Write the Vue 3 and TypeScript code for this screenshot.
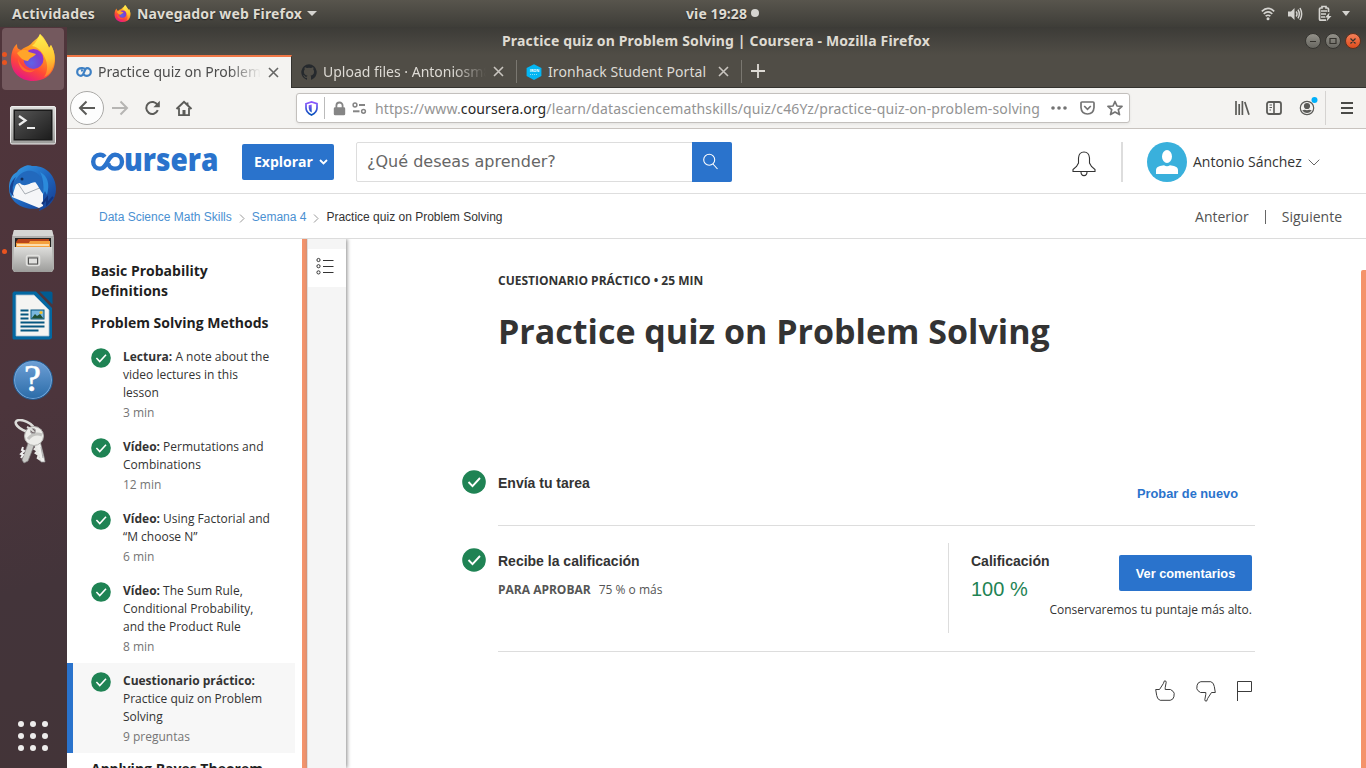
<script setup lang="ts">
interface Lesson {
  kind: string
  title: string
  meta: string
  active?: boolean
}

const lessons: Lesson[] = [
  { kind: 'Lectura:', title: 'A note about the video lectures in this lesson', meta: '3 min' },
  { kind: 'Vídeo:', title: 'Permutations and Combinations', meta: '12 min' },
  { kind: 'Vídeo:', title: 'Using Factorial and “M choose N”', meta: '6 min' },
  { kind: 'Vídeo:', title: 'The Sum Rule, Conditional Probability, and the Product Rule', meta: '8 min' },
  { kind: 'Cuestionario práctico:', title: 'Practice quiz on Problem Solving', meta: '9 preguntas', active: true },
]
const gridDots: number[] = [0, 1, 2, 3, 4, 5, 6, 7, 8]
</script>

<template>
  <div class="desktop">
    <svg class="defs" width="0" height="0">
      <defs>
        <linearGradient id="ffBody" x1="0.8" y1="0" x2="0.3" y2="1">
          <stop offset="0" stop-color="#ffe14a" /><stop offset="0.4" stop-color="#ff9a1f" />
          <stop offset="0.7" stop-color="#ff4a36" /><stop offset="1" stop-color="#e31587" />
        </linearGradient>
        <linearGradient id="ffFlame" x1="0.5" y1="0" x2="0.6" y2="1">
          <stop offset="0" stop-color="#fff04f" /><stop offset="0.6" stop-color="#ffc531" /><stop offset="1" stop-color="#ff7a2c" />
        </linearGradient>
        <radialGradient id="ffGlobe" cx="0.4" cy="0.7" r="0.8">
          <stop offset="0" stop-color="#5f63e6" /><stop offset="0.6" stop-color="#7a3fd0" /><stop offset="1" stop-color="#a928c9" />
        </radialGradient>
        <symbol id="firefox" viewBox="0 0 46 47">
          <path d="M7 10 C7 14 8 15 11 16 C14 13 18 13 21 10 C25 5 29 4 30 0 C33 2 36 7 38 11 L39 14 L41 11 C45 18 46 26 44 33 C41 42 33 47 23 47 C10 47 1 38 1 26 C1 19 3 13 7 10Z" fill="url(#ffBody)" />
          <path d="M22 12 C26 9 28 4 30 0 C32 4 37 8 39 14 L41 11 C45 18 46 27 42 35 C40 40 37 42 34 43 C38 38 38 30 35 24 C32 17 28 13 22 12Z" fill="url(#ffFlame)" />
          <circle cx="23.500" cy="25" r="10" fill="url(#ffGlobe)" />
          <path d="M7 19 C12 15 16 15 19 18 L26 20 C24 23 20 23 18 27 C14 27 10 24 7 19Z" fill="#ffa52a" />
          <path d="M8 24 C10 32 16 38 25 36 C18 42 8 36 8 24Z" fill="#ff6a2c" />
        </symbol>
        <linearGradient id="silver" x1="0" y1="0" x2="0" y2="1"><stop offset="0" stop-color="#dededc" /><stop offset="1" stop-color="#9c9c9a" /></linearGradient>
        <linearGradient id="black" x1="0" y1="0" x2="1" y2="1"><stop offset="0" stop-color="#555" /><stop offset="1" stop-color="#1d1d1d" /></linearGradient>
        <linearGradient id="bird" x1="0" y1="0" x2="1" y2="1"><stop offset="0" stop-color="#39a0e8" /><stop offset="0.5" stop-color="#1f68c1" /><stop offset="1" stop-color="#15388a" /></linearGradient>
        <linearGradient id="shield" x1="0" y1="0" x2="0" y2="1"><stop offset="0" stop-color="#9059ff" /><stop offset="1" stop-color="#0250bb" /></linearGradient>
        <linearGradient id="knob" x1="0" y1="0" x2="0" y2="1"><stop offset="0" stop-color="#95938b" /><stop offset="1" stop-color="#65645e" /></linearGradient>
        <linearGradient id="knobClose" x1="0" y1="0" x2="0" y2="1"><stop offset="0" stop-color="#f5825b" /><stop offset="1" stop-color="#df4a1a" /></linearGradient>
        <symbol id="check" viewBox="0 0 24 24">
          <circle cx="12" cy="12" r="11.800" fill="#1f8354" />
          <path d="M6.500 12 L10.500 16.200 L18 8" fill="none" stroke="#fff" stroke-width="1.900" />
        </symbol>
        <symbol id="thumb" viewBox="0 0 20 22">
          <path d="M.7 9.500H4.500L8.300 3.600 9.400.9Q11 .4 11.200 2.200L10.200 7.700V9.500H15.500L18.200 11.500 19.200 13.300 18.900 16.800 17.600 19.200 15.200 20.300H5.200L2.800 18.600 1.700 15.500 .7 9.500Z" fill="none" stroke="#3c3c3c" stroke-width="1" />
        </symbol>
      </defs>
    </svg>

    <header class="panel">
      <span class="panel-left">Actividades</span>
      <svg class="panel-fx" width="17" height="17"><use href="#firefox" /></svg>
      <span class="panel-app">Navegador web Firefox</span>
      <i class="caret"></i>
      <div class="clock"><span>vie 19:28</span><i></i></div>
      <div class="tray">
        <svg width="14" height="14" viewBox="0 0 14 14" fill="none" stroke="#d5d4d0" stroke-width="1.600"><path d="M.8 4.300Q7-1.600 13.200 4.300M2.700 6.800Q7 3 11.300 6.800M4.600 9.200Q7 7.300 9.400 9.200" /><circle cx="7" cy="11.800" r="1.500" fill="#d5d4d0" stroke="none" /></svg>
        <svg width="15" height="14" viewBox="0 0 15 14" fill="none" stroke="#d5d4d0" stroke-width="1.500"><path d="M0 4.500H3L6.500 1V13L3 9.500H0Z" fill="#d5d4d0" stroke="none" /><path d="M8.200 4.500Q9.800 7 8.200 9.500M10 2.700Q12.600 7 10 11.300M12 1Q15.300 7 12 13" /></svg>
        <svg class="battery" width="14" height="17" viewBox="0 0 14 17" fill="none" stroke="#d5d4d0" stroke-width="1.700"><path d="M8 15.200H2.500Q1.500 15.200 1.500 14V4Q1.500 3 2.500 3H4V1.500H8V3H9.500Q10.500 3 10.500 4V7M3 6H9M3 9H8M3 12H7" /><path d="M11.500 7.500L7 12.500H9.500L8.500 16.500 13.500 11H11Z" fill="#d5d4d0" stroke="none" /></svg>
        <i class="caret"></i>
      </div>
    </header>

    <div class="workspace">
      <nav class="dock">
        <div class="tile selected"><i class="run two"></i><svg width="46" height="47"><use href="#firefox" /></svg></div>
        <div class="tile"><svg width="46" height="39" viewBox="0 0 46 39"><rect x=".5" y=".5" width="45" height="37.500" rx="1.500" fill="url(#silver)" stroke="#eee" /><rect x="3.500" y="3.500" width="39" height="31" fill="#1a1a1a" /><rect x="5" y="5" width="36" height="28" fill="url(#black)" /><path d="M9 10L15.500 14.500 9 19" fill="none" stroke="#eee" stroke-width="2.200" /><path d="M17 22H25" stroke="#eee" stroke-width="2" /></svg></div>
        <div class="tile mail"><svg width="49" height="48" viewBox="0 0 49 48"><path d="M15 3C18 1 22 1 24 2C38 1 48 12 48 25C48 35 42 43 31 47L32 44C20 47 8 42 3 33C-1 24 1 12 9 8C10 6 12 4 15 3Z" fill="url(#bird)" /><path d="M9 17L12 19 17 20 28 18 35 26V42L31 44 4 33Z" fill="#f5f6f8" /><path d="M9 18L17 30 34 23" fill="none" stroke="#a7adb3" stroke-width="1" /><path d="M9 14C16 4 28 5 33 14C35 20 35 25 36 31C32 27 30 20 26 17C21 21 15 23 12 19C9 19 8 21 5 23C4 20 6 17 9 14Z" fill="#2269bd" /><path d="M32 8C40 12 42 20 39 31L37 27 35 31C36 20 35 14 32 8Z" fill="#2b8adb" /><path d="M34 40L39 34 39 40 45 33" fill="none" stroke="#12347d" stroke-width="2" /><circle cx="14" cy="15" r="1.500" fill="#102c58" /><path d="M2 28C1 23 3 17 8 13C4 20 4 27 6 33Z" fill="#184291" /></svg></div>
        <div class="tile files"><i class="run"></i><svg width="42" height="44" viewBox="0 0 42 44"><path d="M2 1H40L42 8V40L40 43H2L0 40V8Z" fill="#b0b0ae" /><path d="M2 1H40L41.500 7H.5Z" fill="#d5d5d3" /><rect x="3" y="9" width="36" height="12" fill="#252321" /><path d="M4 21V13L6 10H37V21Z" fill="#b8441a" /><path d="M4 21V14H17L18 12H38V21Z" fill="#f5a03d" /><path d="M5 16H37" stroke="#fff0cf" stroke-width="1.500" /><path d="M2 18H40L41 41 39 43H3L1 41Z" fill="url(#silver)" /><rect x="14.500" y="26.500" width="13" height="10" rx="2" fill="#b7b7b5" stroke="#e1e1df" stroke-width="1.500" /><rect x="16.500" y="29" width="9" height="6" fill="#dfdfdd" stroke="#555" /></svg></div>
        <div class="tile"><svg width="41" height="49" viewBox="0 0 41 49"><path d="M2 .5H24L40 17V47L38 48.500H2Q.5 48.500 .5 47V2Z" fill="#0368a2" /><path d="M27.500 .5H38.500Q40.500 .5 40.500 2V13.500Z" fill="#005b91" /><path d="M4 4H22L37 19V45H4Z" fill="#f4f4f2" stroke="#a7bed0" stroke-width=".8" /><path d="M8.500 19.500H16.500M8.500 23.500H16.500M8.500 27.500H16.500M8.500 31.500H32.500M8.500 35.500H32.500M8.500 39.500H26.500" stroke="#065780" stroke-width="1.900" /><rect x="19" y="19" width="13" height="9" fill="#79b7df" stroke="#065780" stroke-width="1" /><path d="M19.500 27.500L23 23 25 25 28 23 31.500 27.500Z" fill="#215034" /><circle cx="29" cy="21.500" r="1.600" fill="#f2c12d" /></svg></div>
        <div class="tile assist"><div class="help">?</div></div>
        <div class="tile keys"><svg width="34" height="46" viewBox="0 0 34 46"><ellipse cx="11" cy="7" rx="10" ry="4.600" transform="rotate(25 11 7)" fill="none" stroke="#dcdcd9" stroke-width="2.600" /><path d="M15 22L8 41 10 44 14 42 21 24Z" fill="#c9c9c6" stroke="#888" stroke-width=".7" /><path d="M9 28L8 31 10 32 7 35 9 36 7 39" stroke="#eee" stroke-width="2" fill="none" /><path d="M19 23L27 43 31 43 30 38 26 22Z" fill="#efefed" stroke="#999" stroke-width=".7" /><path d="M23 28L21 30 24 32 22 34 25 36 24 39 27 41" stroke="#e8e8e5" stroke-width="2.500" fill="none" /><circle cx="20" cy="17" r="9.500" fill="#ecece9" stroke="#b1b1ae" /><path d="M14 20Q20 13 28 16" stroke="#c3c3c0" stroke-width="3" fill="none" /><circle cx="19" cy="12" r="2.600" fill="#6a5c60" stroke="#aaa" /><path d="M27 28L29 39" stroke="#aaa" /><path d="M13 8Q18 10 20 13" stroke="#dcdcd9" stroke-width="2.200" fill="none" /></svg></div>
        <div class="apps"><i v-for="dot in gridDots" :key="dot"></i></div>
      </nav>

      <section class="window">
        <div class="titlebar">
          <span class="window-title">Practice quiz on Problem Solving | Coursera - Mozilla Firefox</span>
          <div class="controls">
            <svg width="56" height="18" viewBox="0 0 56 18"><circle cx="8" cy="9" r="7.500" fill="url(#knob)" stroke="#353430" /><circle cx="28" cy="9" r="7.500" fill="url(#knob)" stroke="#353430" /><circle cx="48" cy="9" r="7.500" fill="url(#knobClose)" stroke="#5a3020" /><path d="M5 9.500H11M25 6.500H31V11.500H25ZM45.500 6.500L50.500 11.500M50.500 6.500L45.500 11.500" fill="none" stroke="#35332e" stroke-width="1.200" /></svg>
          </div>
        </div>

        <div class="tabs">
          <div class="tab current">
            <svg width="16" height="16" viewBox="0 0 16 16"><path d="M9.700 5.800C8.800 4.700 7.500 3.900 5.800 4.100 2.700 4 1.200 5.700 1.200 8S3 11.900 5 11.900C8.500 11.900 8.100 4.100 11 4.100 13.200 4.100 14.800 5.800 14.800 8S13.100 11.900 11 11.900C9 11.900 7.800 10.800 7.300 9.600M6.700 7.200C6.300 6.700 5.700 6.300 5 6.500" fill="none" stroke="#3e80c4" stroke-width="2.200" /></svg>
            <span class="tab-label t1">Practice quiz on Problem</span>
            <svg class="close" width="11" height="11" viewBox="0 0 11 11"><path d="M1 1L10 10M10 1L1 10" /></svg>
          </div>
          <div class="tab">
            <svg width="16" height="16" viewBox="0 0 16 16"><path fill="#25292d" d="M8 .2a8 8 0 0 0-2.500 15.500c.4.100.5-.1.500-.4v-1.500c-2.200.5-2.700-1-2.700-1-.4-.9-.9-1.200-.9-1.200-.7-.5.1-.5.100-.5.800.1 1.200.8 1.200.8.700 1.300 1.900.9 2.300.7.100-.5.300-.9.500-1.100-1.800-.2-3.600-.9-3.600-4 0-.8.300-1.500.8-2.100-.1-.2-.4-1 .1-2.100 0 0 .7-.2 2.200.8a7.500 7.500 0 0 1 4 0c1.500-1 2.200-.8 2.200-.8.500 1.100.2 1.900.1 2.100.5.600.8 1.300.8 2.100 0 3.100-1.800 3.800-3.600 4 .3.200.5.700.5 1.400v2.400c0 .3.100.5.500.4A8 8 0 0 0 8 .2Z" /></svg>
            <span class="tab-label t2">Upload files · Antoniosm8</span>
            <svg class="close" width="11" height="11" viewBox="0 0 11 11"><path d="M1 1L10 10M10 1L1 10" /></svg>
          </div>
          <div class="tab">
            <svg width="16" height="16" viewBox="0 0 16 16"><path d="M8 .2L15.400 4V12L8 15.900.6 12V4Z" fill="#03b6f4" /><text x="3.700" y="8" font-size="3.700" font-weight="700" fill="#fff" font-family="Open Sans">IRON</text><path d="M4 10.500H12" stroke="#a8e7fa" stroke-width=".8" stroke-dasharray="1 1" /></svg>
            <span class="tab-label t3">Ironhack Student Portal</span>
            <svg class="close" width="11" height="11" viewBox="0 0 11 11"><path d="M1 1L10 10M10 1L1 10" /></svg>
          </div>
          <svg class="plus" width="14" height="14" viewBox="0 0 14 14"><path d="M7 0V14M0 7H14" stroke="#dedbd5" stroke-width="1.800" /></svg>
        </div>

        <div class="toolbar">
          <span class="back"><svg width="18" height="16" viewBox="0 0 18 16"><path d="M17 8H2M8.500 1.500L2 8L8.500 14.500" /></svg></span>
          <svg class="forward" width="18" height="16" viewBox="0 0 18 16"><path d="M1 8H16M9.500 1.500L16 8L9.500 14.500" /></svg>
          <svg class="reload" width="17" height="16" viewBox="0 0 17 16"><path d="M13.800 10.200A6 6 0 1 1 13.500 5" fill="none" stroke="#5b5b58" stroke-width="2" /><path d="M15.800 .8V7.200H9.400Z" fill="#5b5b58" /></svg>
          <svg class="home" width="18" height="17" viewBox="0 0 18 17"><path d="M1.500 9L9 1.800 16.500 9" fill="none" stroke="#5b5b58" stroke-width="2" /><path d="M4 8V15.200H14V8M12.500 5V2.500" fill="none" stroke="#5b5b58" stroke-width="1.800" /><path d="M7.500 15V10H10.500V15" fill="#5b5b58" /></svg>
          <div class="urlbar">
            <svg width="13" height="15" viewBox="0 0 13 15"><path d="M1 2.700L6.500 1L12 2.700V7Q12 11.500 6.500 14Q1 11.500 1 7Z" fill="none" stroke="url(#shield)" stroke-width="1.700" /><path d="M6.700 3.500V11.500Q3.800 10 3.700 7V4.300Z" fill="url(#shield)" /></svg>
            <i class="url-sep"></i>
            <svg class="lock" width="13" height="15" viewBox="0 0 13 15"><path d="M3.400 7V4.600A3.100 3.100 0 0 1 9.600 4.600V7" fill="none" stroke="#858585" stroke-width="1.800" /><rect x=".8" y="6.300" width="11.400" height="8" rx="1.400" fill="#858585" /></svg>
            <svg class="perm" width="15" height="13" viewBox="0 0 15 13" fill="none" stroke="#858585" stroke-width="1.500"><circle cx="3" cy="3" r="1.900" /><path d="M7 3H13" stroke-width="2" /><circle cx="11.500" cy="9.300" r="1.900" /><path d="M1 9.300H7.500" stroke-width="2" /></svg>
            <span class="url">https://www.<b>coursera.org</b>/learn/datasciencemathskills/quiz/c46Yz/practice-quiz-on-problem-solving</span>
            <svg class="dots" width="16" height="4" viewBox="0 0 16 4" fill="#737373"><circle cx="2" cy="2" r="1.800" /><circle cx="8" cy="2" r="1.800" /><circle cx="14" cy="2" r="1.800" /></svg>
            <svg class="pocket" width="15" height="14" viewBox="0 0 15 14" fill="none" stroke="#737373" stroke-width="1.700"><path d="M1 2Q1 1 2 1H13Q14 1 14 2V6.500Q13.500 13 7.500 13Q1.500 13 1 6.500ZM4.200 5L7.500 8.300 10.800 5" /></svg>
            <svg class="star" width="16" height="16" viewBox="0 0 16 16"><path d="M8 1.500L10 6 15 6.400 11.300 9.600 12.500 14.600 8 12 3.500 14.600 4.700 9.600 1 6.400 6 6Z" fill="none" stroke="#737373" stroke-width="1.700" stroke-linejoin="round" /></svg>
          </div>
          <div class="tools">
            <svg width="15" height="14" viewBox="0 0 15 14" stroke="#5b5b58" stroke-width="1.700"><path d="M1 0V14M4.200 3V14M7.400 0V14M9.800 1L14 13.700" /></svg>
            <svg width="16" height="14" viewBox="0 0 16 14" fill="none" stroke="#5b5b58"><rect x="1" y="1" width="14" height="12" rx="2" stroke-width="1.800" /><path d="M8 1V13" stroke-width="1.600" /><path d="M3.500 4H6M3.500 6.500H6M3.500 9H5" /></svg>
            <svg width="20" height="20" viewBox="0 0 20 20"><circle cx="8" cy="12" r="6.700" fill="none" stroke="#5b5b58" stroke-width="1.200" /><circle cx="8" cy="10" r="3.100" fill="#5b5b58" /><path d="M3.200 14.500Q5.500 13 8 14.300 10.500 13 12.800 14.500 8 19.500 3.200 14.500Z" fill="#5b5b58" /><circle cx="15.500" cy="4" r="3" fill="#00b0fa" /></svg>
            <i class="tool-sep"></i>
            <svg width="12" height="12" viewBox="0 0 12 12"><path d="M0 1H12M0 6H12M0 11H12" stroke="#4a4a47" stroke-width="1.800" /></svg>
          </div>
        </div>

        <div class="site-header">
          <svg class="logo" width="128" height="22" viewBox="0 0 128 22">
            <path d="M13.800 6C12.800 4.700 11 3.800 9 3.800 5 3.800 2.200 6.700 2.200 10.700S5 17.600 9 17.600C16.500 17.600 16.500 3.800 24 3.800 28.200 3.800 31 6.700 31 10.700S28.200 17.600 24 17.600C20.500 17.600 17.600 15.500 17.200 12.300" fill="none" stroke="#2a73cc" stroke-width="4.400" />
            <text x="33" y="19.700" textLength="94.500" lengthAdjust="spacingAndGlyphs" class="logo-text">ursera</text>
          </svg>
          <button class="explore">Explorar<svg width="9" height="6" viewBox="0 0 9 6"><path d="M1 1L4.500 4.500L8 1" fill="none" stroke="#fff" stroke-width="1.800" /></svg></button>
          <div class="search"><span>¿Qué deseas aprender?</span><i><svg width="16" height="17" viewBox="0 0 16 17" fill="none" stroke="#fff" stroke-width="1.100"><circle cx="6.200" cy="6.700" r="5.500" /><path d="M10 11L14.500 16" /></svg></i></div>
          <svg class="bell" width="24" height="26" viewBox="0 0 24 26" fill="none" stroke="#333" stroke-width="1.100"><path d="M1 20.500H23V18.500L19.500 15.500 17.500 12V7Q17 1 12 1T6.500 7V12L4.500 15.500 1 18.500ZM9 21Q9 24.600 12 24.600T15 21" /></svg>
          <i class="header-sep"></i>
          <svg class="avatar" width="40" height="40" viewBox="0 0 40 40"><circle cx="20" cy="20" r="20" fill="#39b0dc" /><ellipse cx="20" cy="14.500" rx="5" ry="6.500" fill="#fff" /><path d="M9 32V28Q9 25 13 24L17 23.300Q20 25 23 23.300L27 24Q31 25 31 28V32Z" fill="#fff" /></svg>
          <span class="user">Antonio Sánchez</span>
          <svg class="chev" width="12" height="7" viewBox="0 0 12 7"><path d="M.7 .7L6 6L11.300 .7" fill="none" stroke="#666" /></svg>
        </div>

        <div class="crumbs">
          <a class="c1">Data Science Math Skills</a>
          <svg width="6" height="9" viewBox="0 0 6 9"><path d="M1 .5L5 4.500L1 8.500" fill="none" stroke="#999" /></svg>
          <a class="c2">Semana 4</a>
          <svg width="6" height="9" viewBox="0 0 6 9"><path d="M1 .5L5 4.500L1 8.500" fill="none" stroke="#999" /></svg>
          <span class="c3">Practice quiz on Problem Solving</span>
          <div class="pager"><span>Anterior</span><i></i><span>Siguiente</span></div>
        </div>

        <div class="course">
          <aside class="outline">
            <h3>Basic Probability Definitions</h3>
            <h3>Problem Solving Methods</h3>
            <div v-for="lesson in lessons" :key="lesson.title" class="lesson" :class="{ active: lesson.active }">
              <svg width="20" height="20"><use href="#check" /></svg>
              <div><p><b>{{ lesson.kind }}</b> {{ lesson.title }}</p><small>{{ lesson.meta }}</small></div>
            </div>
            <h3 class="last">Applying Bayes Theorem</h3>
          </aside>
          <div class="scroll-thumb"></div>
          <div class="rail"><span><svg width="18" height="18" viewBox="0 0 18 18" fill="none" stroke="#333"><circle cx="2.500" cy="3" r="1.600" /><circle cx="2.500" cy="9.200" r="1.600" /><circle cx="2.500" cy="15.400" r="1.600" /><path d="M7 3.500H17.500M7 9.500H17.500M7 15.500H17.500" /></svg></span></div>

          <main class="quiz">
            <div class="eyebrow">CUESTIONARIO PRÁCTICO • 25 MIN</div>
            <h1>Practice quiz on Problem Solving</h1>
            <div class="step submit">
              <svg class="mark" width="24" height="24"><use href="#check" /></svg>
              <h2>Envía tu tarea</h2>
              <a class="retry">Probar de nuevo</a>
            </div>
            <div class="step grade">
              <svg class="mark" width="24" height="24"><use href="#check" /></svg>
              <div class="pass"><h2>Recibe la calificación</h2><p><b>PARA APROBAR</b>75 % o más</p></div>
              <div class="score">
                <div><h2>Calificación</h2><strong>100 %</strong></div>
                <div class="review"><button>Ver comentarios</button><p>Conservaremos tu puntaje más alto.</p></div>
              </div>
            </div>
            <div class="feedback">
              <svg width="20" height="22"><use href="#thumb" /></svg>
              <svg class="down" width="20" height="22"><use href="#thumb" /></svg>
              <svg width="16" height="22" viewBox="0 0 16 22"><path d="M1.500 21V1.500H15.500V11.500H1.500" fill="none" stroke="#3c3c3c" /></svg>
            </div>
          </main>
          <div class="page-thumb"></div>
        </div>
      </section>
    </div>
  </div>
</template>

<style>
html, body { margin: 0; overflow: hidden; }
</style>

<style scoped>
* { box-sizing: border-box; }
h1, h2, h3, p { margin: 0; }
svg { display: block; flex: none; }
.defs { position: absolute; }
button { border: 0; padding: 0; }
.desktop { width: 1366px; height: 768px; display: flex; flex-direction: column; overflow: hidden; font-family: "Open Sans", "Noto Sans", sans-serif; color: #333; background: #fff; white-space: nowrap; }

.panel { position: relative; height: 27px; flex: none; display: flex; align-items: center; padding-left: 12px; background: linear-gradient(#58554d, #3e3d38); color: #dfdbd2; font: 700 14px/27px "Noto Sans", sans-serif; text-shadow: 0 1px 1px #222; }
.panel-left { width: 102px; letter-spacing: .2px; }
.panel-app { margin-left: 6px; width: 165px; letter-spacing: .15px; }
.caret { width: 0; height: 0; border: 5px solid transparent; border-top-color: #d5d4d0; border-bottom: 0; margin-left: 5px; }
.clock { position: absolute; left: 686px; top: 0; display: flex; align-items: center; gap: 4px; height: 26px; letter-spacing: .1px; }
.clock i { width: 8px; height: 8px; border-radius: 50%; background: #d5d4d0; }
.tray { margin-left: auto; display: flex; align-items: center; margin-right: 16px; gap: 13px; }
.battery { margin-left: 2px; }
.tray .caret { margin-left: -3px; border-width: 5px 4.500px 0; }

.workspace { flex: 1; min-height: 0; display: flex; }
.dock { width: 67px; flex: none; background: linear-gradient(165deg, #50353b, #4c353c 50%, #43343a 75%, #433438); display: flex; flex-direction: column; align-items: center; padding: 1px 2px 0 0; }
.tile { position: relative; width: 62px; height: 62px; margin-bottom: 2px; display: flex; align-items: center; justify-content: center; border-radius: 4px; flex: none; }
.tile.selected { background: #74595e; padding-bottom: 3px; }
.tile:nth-child(2) { margin-top: 2px; }
.tile:nth-child(3), .tile:nth-child(4) { margin-bottom: 1px; }
.mail, .files { padding-bottom: 2px; }
.assist { padding-top: 2px; }
.keys { padding-right: 3px; padding-top: 2px; margin-top: -2px; }
.run { position: absolute; left: 0; width: 5px; height: 5px; border-radius: 50%; background: #e95420; }
.run.two { top: 24px; box-shadow: 0 8px #e95420; }
.help { width: 40px; height: 40px; border-radius: 50%; border: 1.500px solid #245c92; background: linear-gradient(#6d9fd6, #2b6ca8); box-shadow: inset 0 0 0 1px #75a6d8; color: #fff; text-align: center; font: 38px/35px "Liberation Serif", serif; -webkit-text-stroke: .6px #fff; }
.apps { margin: auto 0 17px; display: grid; grid-template-columns: repeat(3, 6px); gap: 6px; }
.apps i { width: 6px; height: 6px; border-radius: 50%; background: #eeedec; }

.window { flex: 1; min-width: 0; display: flex; flex-direction: column; background: #fff; }
.titlebar { position: relative; height: 28px; flex: none; background: linear-gradient(#3c3b37, #504d46); color: #dfdbd2; display: flex; align-items: center; padding-left: 435px; }
.window-title { font: 700 14px/28px "Noto Sans", sans-serif; letter-spacing: .165px; }
.controls { margin-left: auto; margin-right: 5px; }
.tabs { height: 33px; flex: none; display: flex; background: #504d46; border-bottom: 1px solid #34332f; }
.tab { width: 225px; height: 32px; display: flex; align-items: center; padding-left: 9px; padding-top: 1px; color: #dedbd5; font: 14px/32px "Noto Sans", sans-serif; position: relative; border-right: 0; }
.tab + .tab::after { content: ""; position: absolute; right: 0; top: 5px; height: 23px; width: 1px; background: #7a7770; }
.tab.current { height: 33px; background: #f4f3f1; border-top: 2px solid #f07746; color: #4c4c4c; border-right: 1px solid #34332f; padding-top: 0; padding-bottom: 1px; }
.tab-label { width: 163px; margin: 0 7px 0 6px; overflow: hidden; }
.t1, .t2 { mask-image: linear-gradient(90deg, #000 80%, transparent); }
.t3 { letter-spacing: .09px; }
.close path { stroke: currentColor; stroke-width: 1.600; fill: none; opacity: .85; }
.plus { margin: 9px 0 0 9px; }
.toolbar { height: 41px; flex: none; display: flex; align-items: center; background: #f4f3f1; border-bottom: 1px solid #c8c3bf; padding-left: 3px; }
.back { width: 34px; height: 34px; border: 1px solid #aaa9a7; background: #fdfdfd; border-radius: 50%; display: flex; align-items: center; justify-content: center; }
.back path, .forward path { fill: none; stroke: #5b5b58; stroke-width: 2; }
.forward { margin-left: 7px; opacity: .4; }
.reload { margin-left: 15px; }
.home { margin-left: 14px; }
.urlbar { width: 834px; height: 30px; margin-left: 103px; background: #fff; border: 1px solid #c3c0bd; border-radius: 3px; display: flex; align-items: center; padding-left: 8px; box-shadow: 0 1px 3px #0001; }
.url-sep { width: 1px; height: 22px; background: #bbb; margin: 0 8px 0 6px; }
.perm { margin: 0 8px 0 6px; }
.url { width: 668px; font: 14px/28px "Noto Sans", sans-serif; color: #939393; letter-spacing: .117px; padding-top: 1px; }
.url b { font-weight: 400; color: #262626; }
.dots { margin-left: 8px; }
.pocket { margin-left: 13px; }
.star { margin-left: 12px; }
.tools { display: flex; align-items: center; margin-left: 105px; }
.tools svg:nth-child(2) { margin-left: 16px; }
.tools svg:nth-child(3) { margin: -5px 0 0 17px; }
.tool-sep { width: 1px; height: 34px; background: #d5d3d1; margin: 0 15px 0 6px; }

.site-header { height: 65px; flex: none; display: flex; align-items: center; border-bottom: 1px solid #dedede; padding-left: 24px; padding-top: 1px; }
.logo { overflow: visible; }
.logo-text { font: 800 31px "Open Sans", sans-serif; fill: #2a73cc; }
.explore { width: 92px; height: 36px; margin-left: 23px; display: flex; align-items: center; background: #2a73cc; color: #fff; border-radius: 2px; font: 700 14px/36px "Open Sans", sans-serif; padding-left: 12px; gap: 6px; }
.search { width: 376px; height: 40px; margin-left: 22px; display: flex; border: 1px solid #ddd; border-radius: 2px; font: 16px/37px "DejaVu Sans", sans-serif; color: #666; padding-left: 10px; }
.search i { width: 40px; height: 40px; margin: -1px -1px 0 auto; background: #2a73cc; border-radius: 0 2px 2px 0; display: flex; align-items: center; justify-content: center; padding-right: 2px; }
.bell { margin-left: 340px; margin-top: 4px; }
.header-sep { width: 2px; height: 40px; background: #ddd; margin-left: 25px; }
.avatar { margin-left: 24px; }
.user { margin-left: 6px; width: 109px; font-size: 14px; }
.chev { margin-left: 6px; margin-top: 2px; }
.crumbs { height: 45px; flex: none; display: flex; align-items: center; border-bottom: 1px solid #dcdcdc; padding: 2px 0 0 32px; font: 12px/18px "Liberation Sans", Arial, sans-serif; }
.crumbs a { color: #4a90d2; }
.crumbs svg { margin: 2px 7px 0 7px; }
.pager { margin-left: auto; margin-right: 24px; display: flex; align-items: center; font: 14px/20px "Open Sans", sans-serif; color: #525252; }
.pager i { width: 1px; height: 14px; background: #666; margin: 0 16px; }

.course { flex: 1; min-height: 0; display: flex; overflow: hidden; }
.outline { width: 228px; margin-right: 7px; flex: none; padding-top: 22px; white-space: normal; }
.outline h3 { margin: 0 0 12px 24px; font-size: 14px; line-height: 20px; color: #1f1f1f; padding-right: 20px; }
.outline h3:nth-of-type(2) { margin-bottom: 6px; padding-right: 0; }
.outline h3.last { margin-top: 6px; padding: 0; white-space: nowrap; }
.lesson { display: flex; gap: 12px; padding: 9px 24px 7px; font-size: 12px; line-height: 18px; }
.lesson p { width: 152px; }
.lesson small { display: block; margin-top: 2px; font-size: 12px; color: #757575; }
.lesson.active { background: #f7f7f7; border-left: 6px solid #2a73cc; padding-left: 18px; }
.scroll-thumb { width: 5px; background: #f4936b; flex: none; }
.rail { width: 39px; flex: none; background: #f5f5f5; border-left: 1px solid #ddd; padding-top: 10px; box-shadow: 1px 0 4px #8a8a8a; }
.rail span { height: 38px; background: #fff; display: flex; align-items: center; padding-left: 8px; padding-bottom: 4px; }

.quiz { width: 757px; margin-left: 152px; padding-top: 32px; flex: none; }
.eyebrow { font-size: 12px; font-weight: 700; line-height: 20px; }
h1 { margin-top: 15px; font-size: 34px; line-height: 50px; font-weight: 700; }
h2 { font: 700 14px/20px "Liberation Sans", Arial, sans-serif; color: #333; }
.step { display: flex; position: relative; border-bottom: 1px solid #ddd; }
.mark { margin-left: -36px; margin-right: 12px; }
.submit { margin-top: 114px; height: 56px; }
.submit h2 { padding-top: 3px; }
.retry { margin-left: auto; margin-right: 17px; padding-top: 14px; color: #2a73cc; font: 700 12.800px/20px "Liberation Sans", Arial, sans-serif; }
.grade { height: 126px; padding-top: 22px; }
.pass { width: 450px; padding-top: 3px; }
.pass p { margin-top: 9px; font-size: 12px; line-height: 20px; color: #555; }
.pass b { margin-right: 8px; }
.score { height: 90px; margin-top: -5px; border-left: 1px solid #ddd; padding: 8px 0 0 22px; display: flex; flex: 1; }
.score strong { display: block; margin-top: 6px; color: #1f8354; font: 20px/24px "Liberation Sans", Arial, sans-serif; }
.review { margin-right: 3px; display: flex; flex-direction: column; align-items: flex-end; padding-top: 4px; margin-left: -40px; flex: 1; }
.review button { width: 133px; height: 36px; flex: none; background: #2a73cc; border-radius: 2px; color: #fff; font: 700 12.800px/37px "Liberation Sans", Arial, sans-serif; }
.review p { margin-top: 9px; font-size: 12px; line-height: 20px; }
.feedback { display: flex; justify-content: flex-end; gap: 21px; padding: 28px 3px 0 0; }
.down { transform: rotate(180deg); margin-right: -1px; }
.page-thumb { width: 5px; margin: 31px 0 0 auto; background: #f4936b; flex: none; border-radius: 2px 0 0; }
</style>
